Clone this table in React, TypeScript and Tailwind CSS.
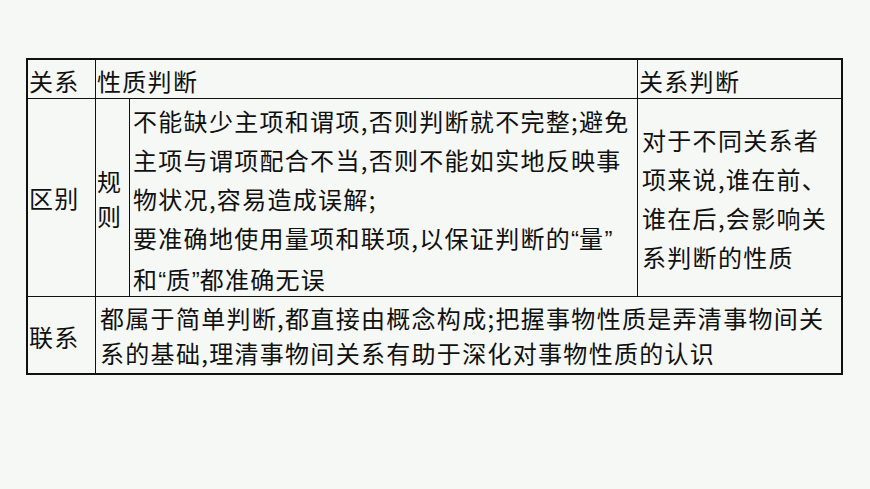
const font = { fontFamily: '"Noto Sans CJK SC", "Noto Sans", sans-serif' };

// narrow Latin quotes, as in the reference
function Q({ children }: { children: string }) {
  return <span className="font-['Liberation_Sans'] tracking-normal">{children}</span>;
}

export default function App() {
  return (
    <div className="w-[870px] h-[489px] bg-[#f5f8f4] pt-[58px] pl-[26px] text-[#111] text-[24px] tracking-[1.3px]" style={font}>
      <div className="w-[817px] border-2 border-[#111] grid grid-cols-[68px_34px_508px_203px] grid-rows-[39px_198px_76px]">
        {/* header */}
        <div className="border-r border-b border-[#111] pl-[1px] pt-[3px] leading-[36px]">关系</div>
        <div className="col-span-2 border-r border-b border-[#111] pl-[1px] pt-[3px] leading-[36px]">性质判断</div>
        <div className="border-b border-[#111] pl-[1px] pt-[3px] leading-[36px]">关系判断</div>

        {/* 区别 */}
        <div className="border-r border-b border-[#111] pl-[1px] flex items-center">区别</div>
        <div className="border-r border-b border-[#111] pl-[1px] flex items-center leading-[35px] whitespace-nowrap">
          <div>规<br />则</div>
        </div>
        <div className="border-r border-b border-[#111] pl-[3px] pt-[2px] leading-[39px] whitespace-nowrap">
          不能缺少主项和谓项,否则判断就不完整;避免<br />
          主项与谓项配合不当,否则不能如实地反映事<br />
          物状况,容易造成误解;<br />
          要准确地使用量项和联项,以保证判断的<Q>“</Q>量<Q>”</Q><br />
          和<Q>“</Q>质<Q>”</Q>都准确无误
        </div>
        <div className="border-b border-[#111] pl-[4px] flex items-center leading-[39px] whitespace-nowrap">
          <div>
            对于不同关系者<br />
            项来说,谁在前、<br />
            谁在后,会影响关<br />
            系判断的性质
          </div>
        </div>

        {/* 联系 */}
        <div className="border-r border-[#111] pl-[1px] pt-[4px] flex items-center">联系</div>
        <div className="col-span-3 pl-[4px] flex items-center leading-[35px] whitespace-nowrap">
          <div>
            都属于简单判断,都直接由概念构成;把握事物性质是弄清事物间关<br />
            系的基础,理清事物间关系有助于深化对事物性质的认识
          </div>
        </div>
      </div>
    </div>
  );
}
